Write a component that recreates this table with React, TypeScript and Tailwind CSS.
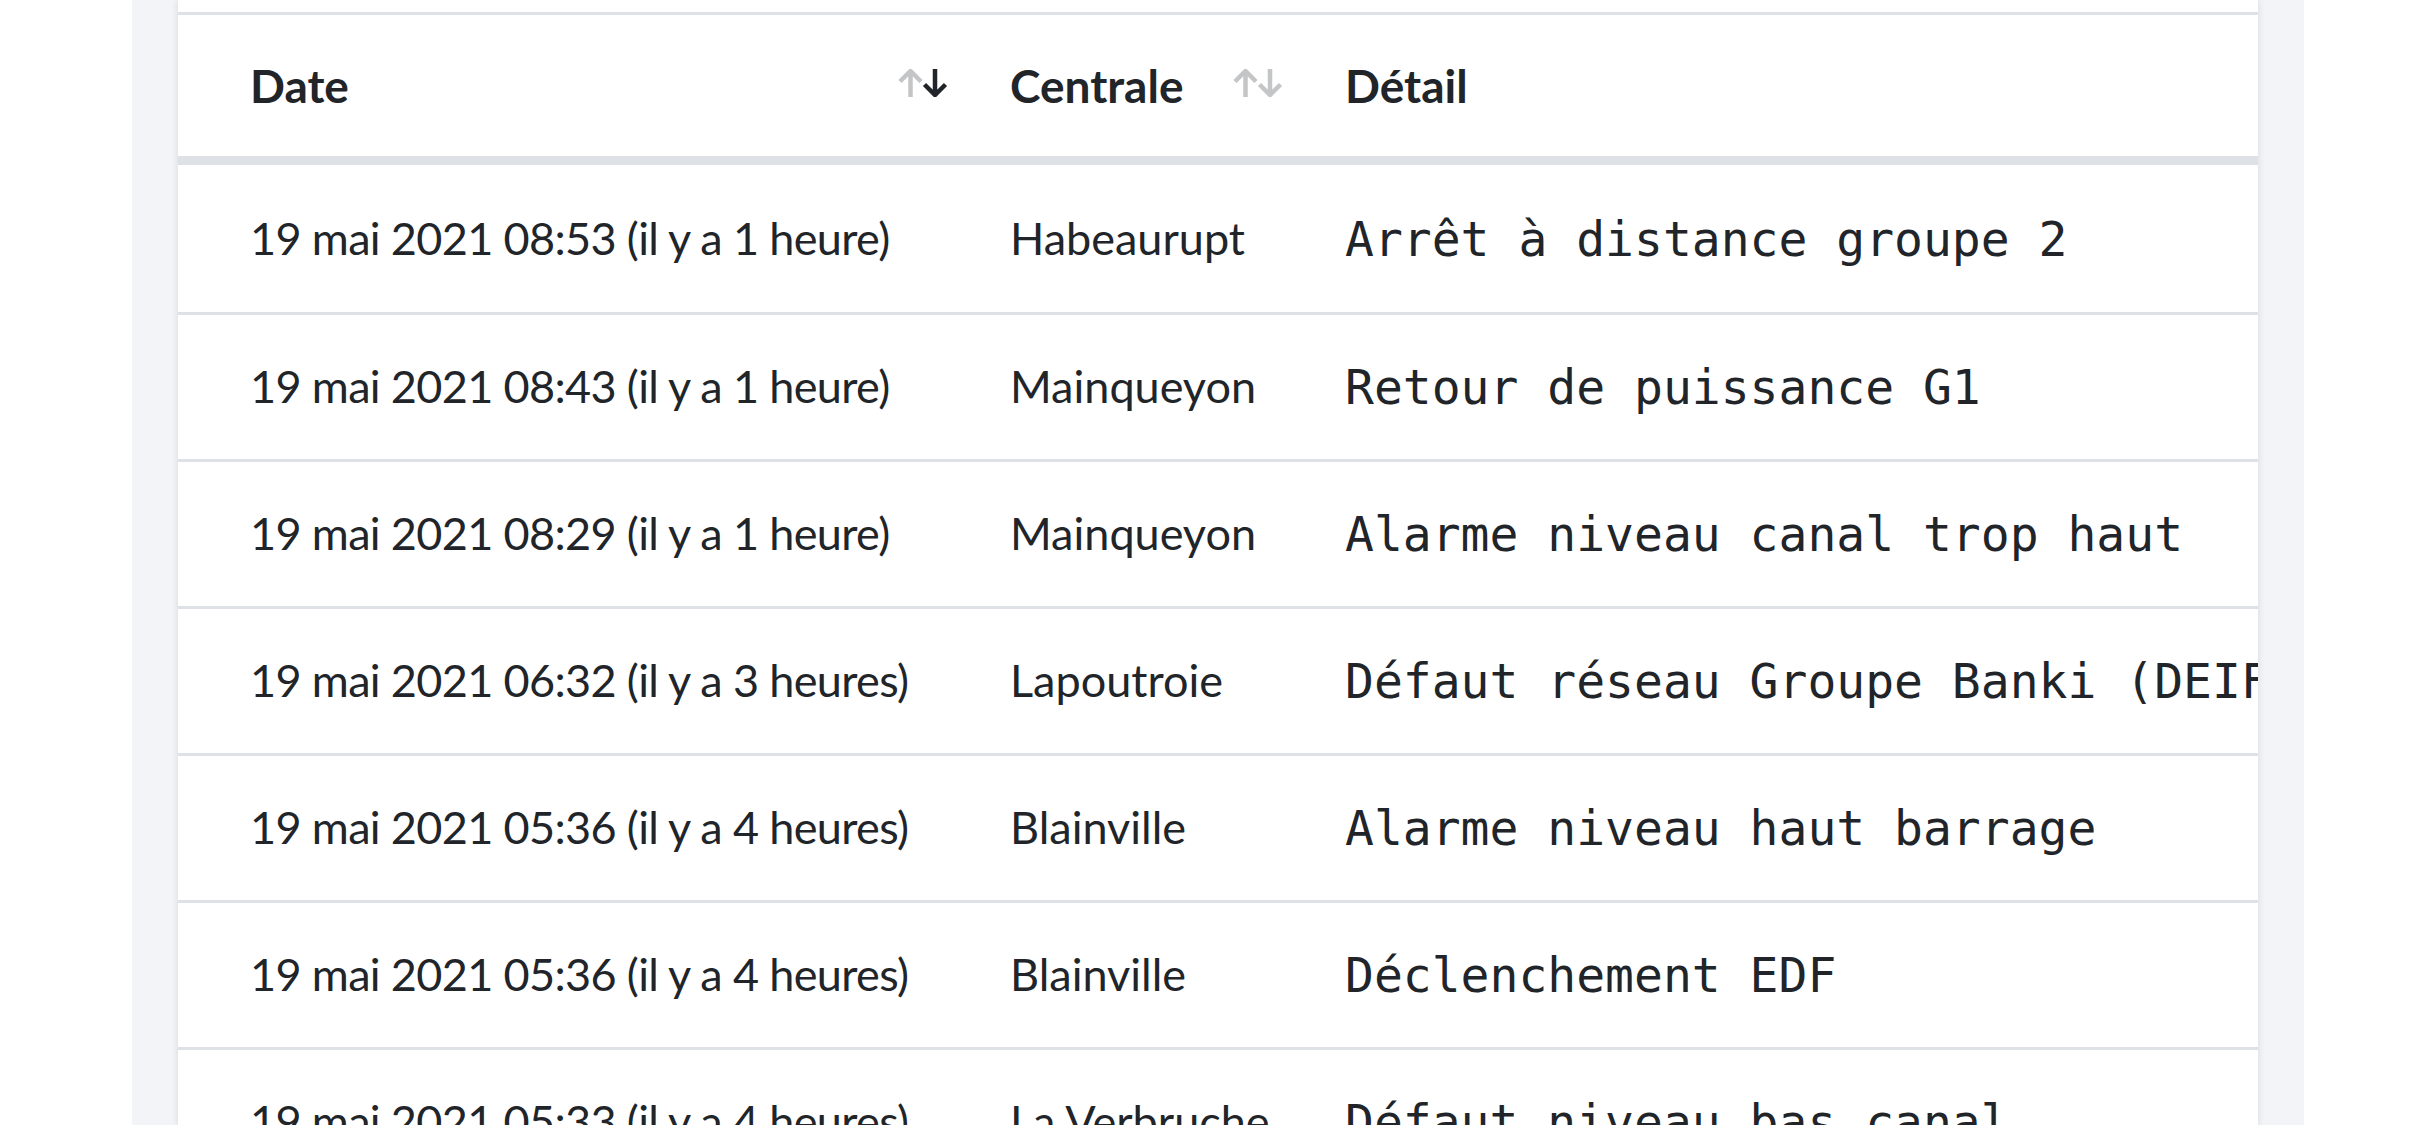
import React from "react";

const rows = [
  ["19 mai 2021 08:53 (il y a 1 heure)", "Habeaurupt", "Arrêt à distance groupe 2"],
  ["19 mai 2021 08:43 (il y a 1 heure)", "Mainqueyon", "Retour de puissance G1"],
  ["19 mai 2021 08:29 (il y a 1 heure)", "Mainqueyon", "Alarme niveau canal trop haut"],
  ["19 mai 2021 06:32 (il y a 3 heures)", "Lapoutroie", "Défaut réseau Groupe Banki (DEIF)"],
  ["19 mai 2021 05:36 (il y a 4 heures)", "Blainville", "Alarme niveau haut barrage"],
  ["19 mai 2021 05:36 (il y a 4 heures)", "Blainville", "Déclenchement EDF"],
  ["19 mai 2021 05:33 (il y a 4 heures)", "La Verbruche", "Défaut niveau bas canal"],
];

function SortIcon({ active }: { active: boolean }) {
  return (
    <svg width="50" height="28" viewBox="0 0 50 28" className="absolute right-[26px] top-[54px]">
      <g fill="none" strokeWidth="4.5" strokeLinecap="butt" strokeLinejoin="miter">
        <path d="M12.5 2 V28 M2 12.5 L12.5 2 L23 12.5" stroke="#c4c5c7" />
        <path
          d="M37 0 V26 M26.5 15.5 L37 26 L47.5 15.5"
          stroke={active ? "#212529" : "#c4c5c7"}
        />
      </g>
    </svg>
  );
}

export default function App() {
  const sans = "font-['Lato',_'Noto_Sans',_sans-serif]";
  return (
    <div className="w-[2436px] h-[1125px] overflow-hidden bg-white">
      <div className="ml-[132px] w-[2172px] h-full bg-[#f3f4f7] px-[46px]">
        <div className="w-[2080px] h-full bg-white overflow-hidden shadow-[0_0_7px_rgba(0,0,0,0.12)]">
          <div className="h-[12px]" />
          {/* header */}
          <div
            className={`flex h-[153px] border-t-[3px] border-b-[9px] border-[#dee2e6] text-[46px] font-bold text-[#212529] ${sans}`}
          >
            <div className="relative w-[796px] shrink-0 pl-[72px] flex items-center">
              <span>Date</span>
              <SortIcon active={true} />
            </div>
            <div className="relative w-[335px] shrink-0 pl-[36px] flex items-center">
              <span>Centrale</span>
              <SortIcon active={false} />
            </div>
            <div className="pl-[36px] flex items-center whitespace-nowrap">
              <span>Détail</span>
            </div>
          </div>
          {rows.map((r, i) => (
            <div
              key={i}
              className={`flex h-[147px] text-[#212529] ${i > 0 ? "border-t-[3px] border-[#dee2e6]" : ""}`}
            >
              <div className={`w-[796px] shrink-0 pl-[72px] flex items-center text-[45px] tracking-[-0.65px] whitespace-nowrap ${sans}`}>
                {r[0]}
              </div>
              <div className={`w-[335px] shrink-0 pl-[36px] flex items-center text-[45px] whitespace-nowrap ${sans}`}>
                {r[1]}
              </div>
              <div className="pl-[36px] flex items-center whitespace-nowrap text-[48px] font-['DejaVu_Sans_Mono',_monospace]">
                {r[2]}
              </div>
            </div>
          ))}
        </div>
      </div>
    </div>
  );
}
